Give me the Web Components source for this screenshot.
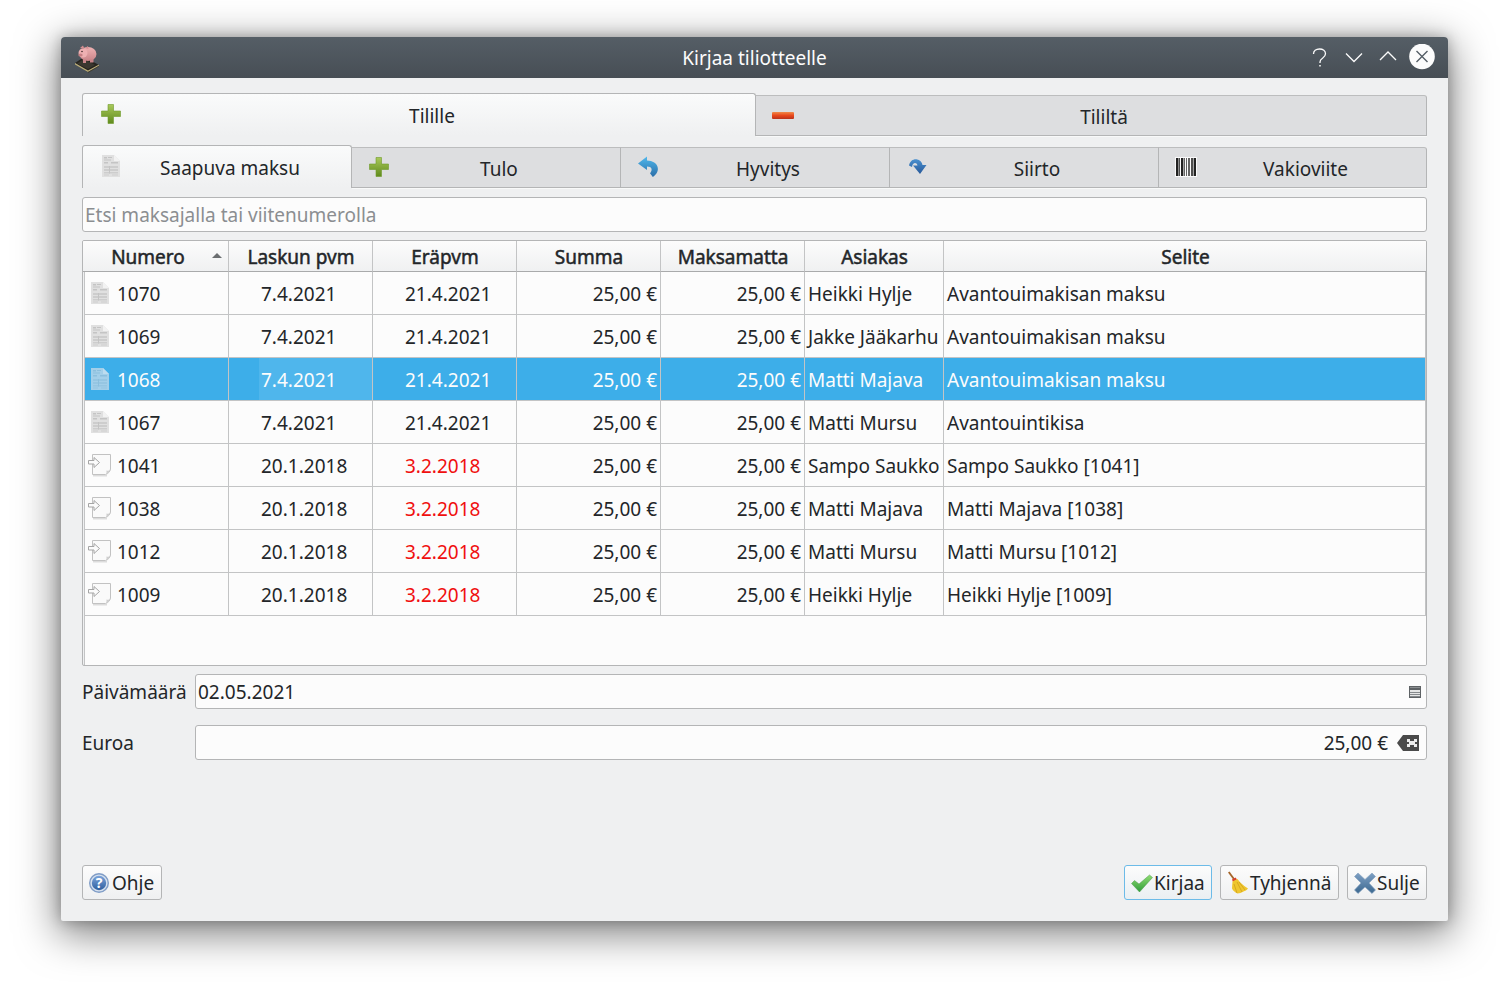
<!DOCTYPE html>
<html lang="fi"><head><meta charset="utf-8"><title>Kirjaa tiliotteelle</title>
<style>
html,body{margin:0;height:100%;background:#fff}
body{padding:37px 61px 61px;box-sizing:border-box;font:19px "Noto Sans",sans-serif;color:#232629;overflow:hidden}
</style></head><body>
<x-window title="Kirjaa tiliotteelle">
  <x-tabbar big>
    <x-tab active icon="plus" label="Tilille"></x-tab>
    <x-tab icon="minus" label="Tililtä"></x-tab>
  </x-tabbar>
  <x-tabbar>
    <x-tab active icon="invoice" label="Saapuva maksu"></x-tab>
    <x-tab icon="plus" label="Tulo"></x-tab>
    <x-tab icon="undo" label="Hyvitys"></x-tab>
    <x-tab icon="redo" label="Siirto"></x-tab>
    <x-tab icon="barcode" label="Vakioviite"></x-tab>
  </x-tabbar>
  <x-search placeholder="Etsi maksajalla tai viitenumerolla"></x-search>
  <x-grid></x-grid>
  <x-field label="Päivämäärä" value="02.05.2021" icon="calendar"></x-field>
  <x-field label="Euroa" value="25,00 €" icon="backspace" right></x-field>
  <x-footer>
    <x-btn icon="help" label="Ohje" w="80"></x-btn>
    <x-spacer></x-spacer>
    <x-btn icon="check" label="Kirjaa" focus w="88"></x-btn>
    <x-btn icon="broom" label="Tyhjennä" w="119"></x-btn>
    <x-btn icon="close" label="Sulje" w="80"></x-btn>
  </x-footer>
</x-window>
<script>
const invoice=(a,b,c,d)=>`<svg width="18" height="22" viewBox="0 0 18 22"><path d="M0 0h12l6 6v16H0z" fill="${a}"/><path d="M12 0l6 6h-6z" fill="${b}"/><g fill="${c}"><rect x="2" y="2" width="3" height="1.500"/><rect x="6" y="2" width="4" height="1"/><rect x="2" y="4.500" width="7" height="1"/><rect x="2" y="7" width="4" height="1.500"/><rect x="9" y="7" width="7" height="1.500"/></g><g fill="${d}"><rect x="2" y="11" width="14" height="2"/><rect x="2" y="14" width="14" height="2"/><rect x="2" y="17" width="14" height="1.500"/><rect x="2" y="19.500" width="5" height="1"/><rect x="10" y="19.500" width="6" height="1"/></g><rect x="7" y="11" width="1" height="7.500" fill="${c}"/></svg>`;
const ICONS={
plus:`<svg width="22" height="22" viewBox="0 0 22 22"><defs><linearGradient id="g" x1="0" y1="0" x2="0" y2="1"><stop offset="0" stop-color="#a9c95a"/><stop offset="1" stop-color="#5f8a1c"/></linearGradient></defs><path d="M8 1.500h5.500v6.500h7v5.500h-7v7H8v-7H1.500V8H8z" fill="url(#g)" stroke="#6f9a2a" stroke-width=".6"/></svg>`,
minus:`<svg width="22" height="22" viewBox="0 0 22 22"><defs><linearGradient id="g" x1="0" y1="0" x2="0" y2="1"><stop offset="0" stop-color="#f08a4a"/><stop offset=".5" stop-color="#e8481c"/><stop offset="1" stop-color="#b9321a"/></linearGradient></defs><rect x="0" y="8" width="22" height="7" rx="1" fill="url(#g)"/></svg>`,
invoice:invoice('#e0e0e0','#f2f2f2','#c4c4c4','#cdcdcd'),
invoiceSel:invoice('#a3cfe9','#bcdcef','#8cbfdd','#96c6e2'),
doc:`<svg width="24" height="24" viewBox="0 0 24 24"><path d="M5 22.700h14" stroke="#dcdcdc" stroke-width="1.500"/><path d="M4.500 1.500h18v14.500c0 2-2.500 5-5 5.500h-13z" fill="#fafafa" stroke="#c2c2c2"/><path d="M17.500 21.500c1.500-1.500 1-3 .8-4 1.500.6 3.200.2 4.200-1.500-.5 2.500-2.500 5-5 5.500z" fill="#cfcfcf"/><path d="M.5 7.500h5.500V4.500l5.500 5-5.500 5v-3.500H.5z" fill="#fbfbfb" stroke="#a5a5a5"/></svg>`,
undo:`<svg width="22" height="22" viewBox="0 0 22 22"><defs><linearGradient id="g" x1="0" y1="0" x2="0" y2="1"><stop offset="0" stop-color="#50b8ec"/><stop offset="1" stop-color="#2b6ea8"/></linearGradient></defs><path d="M10 0.500L1 7.500l9 6.500v-3.500c2.500 0 4 .8 4.500 2.200.4 1.500-.3 3-1.500 4.500l2.800 3.800c3-2 5.500-5.200 5-9C20.200 7 15.500 4.800 10 4.500z" fill="url(#g)"/></svg>`,
redo:`<svg width="22" height="22" viewBox="0 0 22 22"><defs><linearGradient id="g" x1="0" y1="0" x2="0" y2="1"><stop offset="0" stop-color="#4a90cf"/><stop offset="1" stop-color="#27599a"/></linearGradient></defs><path d="M3 9.500C4 5 7 3 10.500 3.300c3.500.4 5.500 2.800 6 5.700H20.500l-6.500 9-7-8.500h4.500c-.6-1.800-1.500-2.600-2.800-2.400C7.200 7.400 6.300 8.800 6 11z" fill="url(#g)"/></svg>`,
barcode:`<svg width="24" height="22" viewBox="-1 0 24 22" shape-rendering="crispEdges"><rect x="-1" width="24" height="22" fill="#fff" opacity=".85"/><g fill="#222"><rect x="0" y="1" width="2" height="20"/><rect x="2" y="1" width="1" height="20" opacity=".5"/><rect x="3" y="1" width="1" height="20" opacity=".8"/><rect x="5" y="1" width="3" height="20"/><rect x="8" y="1" width="1" height="20" opacity=".4"/><rect x="9" y="1" width="1" height="20" opacity=".7"/><rect x="11" y="1" width="1" height="20" opacity=".7"/><rect x="13" y="1" width="2" height="20" opacity=".7"/><rect x="16" y="1" width="1" height="20" opacity=".8"/><rect x="18" y="1" width="1" height="20" opacity=".8"/><rect x="19" y="1" width="1" height="20" opacity=".4"/><rect x="20" y="1" width="2" height="20"/></g></svg>`,
calendar:`<svg width="14" height="14" viewBox="0 0 14 14" shape-rendering="crispEdges"><rect x="1" y="1" width="12" height="12" fill="#5e6265"/><rect x="2" y="5" width="10" height="7" fill="#e4e5e5"/><g fill="#85898c"><rect x="2" y="7" width="10" height="1"/><rect x="2" y="9" width="10" height="1"/><rect x="2" y="11" width="10" height="1"/></g><rect x="2" y="2" width="10" height="1" fill="#8a8e90"/></svg>`,
backspace:`<svg width="22" height="18" viewBox="0 0 22 18"><path d="M6 1h16v16H6L0 9z" fill="#4a4a4a"/><path d="M10 5h3v2h4V5h3v3h-2v2h2v3h-3v-2h-4v2h-3v-3h2V8h-2z" fill="#ececec"/></svg>`,
help:`<svg width="20" height="20" viewBox="0 0 20 20"><defs><linearGradient id="g" x1="0" y1="0" x2="0" y2="1"><stop offset="0" stop-color="#7ba3da"/><stop offset="1" stop-color="#2f5f9f"/></linearGradient></defs><circle cx="10" cy="10" r="10" fill="#7f9cc6"/><circle cx="10" cy="10" r="8.600" fill="#d7e1ee"/><circle cx="10" cy="10" r="7.200" fill="url(#g)"/><text x="10" y="15" text-anchor="middle" font-family="Noto Sans" font-weight="700" font-size="14" fill="#fff">?</text></svg>`,
check:`<svg width="22" height="20" viewBox="0 0 22 20"><defs><linearGradient id="g" x1="0" y1="0" x2="0" y2="1"><stop offset="0" stop-color="#8fdc72"/><stop offset="1" stop-color="#2f9d3a"/></linearGradient></defs><path d="M0.500 10.500l3-3 4.500 3.500L18.500 2l3 2.500L8.500 19z" fill="url(#g)" stroke="#4a9a4a" stroke-width=".5"/></svg>`,
broom:`<svg width="22" height="24" viewBox="0 0 22 24"><path d="M1 1.500l1.500-1L8 8l-1.500 1z" fill="#a5662a"/><path d="M5 8.500l3.500-2 1.500 2-4 2.500z" fill="#d8402a"/><path d="M5.500 10.500l5-2.500c2 3 5 6 10.500 9.500-1 1.500-3 2.500-4.500 3-2 1-4 2-6 2-2-1-4.500-2.500-5.500-5 .2-2.500.3-5 .5-7z" fill="#efc62e"/><path d="M7 13l3 9M10 11l5 10M12 11l6 8" stroke="#cf9f1e" stroke-width=".8" fill="none"/></svg>`,
close:`<svg width="22" height="22" viewBox="0 0 22 22"><defs><linearGradient id="g" x1="0" y1="0" x2="0" y2="1"><stop offset="0" stop-color="#7ea0c4"/><stop offset="1" stop-color="#3b6890"/></linearGradient></defs><path d="M.5 4.500L4 1l7 6.500L18 1l3.500 3.500-6.500 6.500 6.500 7L18 21.500l-7-6.500-7 6.500L.5 18l6.500-7z" fill="url(#g)" stroke="#8aa5c2" stroke-width=".7"/></svg>`,
pig:`<svg width="26" height="28" viewBox="0 0 26 28"><defs><linearGradient id="p" x1="0" y1="0" x2="0" y2="1"><stop offset="0" stop-color="#eeb2b3"/><stop offset="1" stop-color="#c98388"/></linearGradient></defs><path d="M0 18l9-6 15 8-11 7z" fill="#26241f"/><path d="M0 18l13 7.500 11-6v1.200L13 27 0 19.500z" fill="#bcae78"/><path d="M13 27L24 20.700v.8L13 28z" fill="#3f3c32"/><path d="M2 18.500l7-4.500 11 6-7 4z" fill="#3a372f"/><ellipse cx="13" cy="9" rx="8.500" ry="7" fill="url(#p)"/><circle cx="8" cy="8" r="4.500" fill="#eeb0b2"/><ellipse cx="5.500" cy="10" rx="2.200" ry="1.600" fill="#c67f84"/><path d="M5 3l3-2.500L9.500 4zM10 3l3-2 .5 3z" fill="#d48e92"/><circle cx="7" cy="6.500" r=".8" fill="#40292a"/><path d="M8 14h3v4H8zM15 14h3.500v3.500H15z" fill="#c98589"/></svg>`
};
function def(name,html){customElements.define(name,class extends HTMLElement{
  constructor(){super();this.attachShadow({mode:'open'});}
  connectedCallback(){this.shadowRoot.innerHTML=typeof html==='function'?html(this):html;}
});}
const attr=(e,n)=>e.getAttribute(n)||'';

def('x-window',e=>`<style>
:host{display:flex;flex-direction:column;width:1387px;height:884px;background:#eff0f1;border-radius:4px 4px 2px 2px;box-shadow:0 10px 40px 3px rgba(0,0,0,.5),0 0 14px rgba(0,0,0,.25)}
.bar{flex:none;height:41px;background:linear-gradient(#555e66,#474e55);border-radius:4px 4px 0 0;display:flex;align-items:center;color:#fcfcfc;position:relative}
.pig{margin-left:14px;display:flex;width:26px;margin-top:3px}
.t{flex:1;text-align:center;margin-left:-40px}
.btns{position:absolute;right:13px;top:7px;display:flex}
.c{flex:1;display:flex;flex-direction:column;padding:15px 21px 21px;min-height:0}
</style>
<div class="bar"><span class="pig">${ICONS.pig}</span><span class="t">${attr(e,'title')}</span>
<span class="btns">
<svg width="126" height="26" viewBox="0 0 126 26" fill="none" stroke="#fcfcfc" stroke-width="1.300"><path d="M4.500 10c0-3 2.500-5 6-5s6 2 6 4.800c0 2-1 3-3 4.500-1.500 1-2.500 2-2.500 3.700v1"/><path d="M11 21v1.500" stroke-width="1.500"/><path d="M37 9.500l8 8 8-8"/><path d="M71 16l8-8 8 8"/><circle cx="113" cy="12.500" r="12.800" fill="#fcfcfc" stroke="none"/><path d="M107.500 7l11 11M118.500 7l-11 11" stroke="#555e66" stroke-width="1.400"/></svg>
</span></div><div class="c"><slot></slot></div>`);

def('x-tabbar',e=>`<style>
:host{display:grid;grid-template-columns:${e.hasAttribute('big')?'674px 671px':'270px 269px 269px 269px 268px'};height:43px;margin-bottom:9px;flex:none}
</style><slot></slot>`);

def('x-tab',e=>{const a=e.hasAttribute('active');return `<style>
:host{display:block;box-sizing:border-box;min-width:0;${a?'':'padding:2px 0 0;'}}
.b{height:100%;box-sizing:border-box;display:flex;align-items:center;border:1px solid #b4b5b6;${a?'border-bottom:0;background:linear-gradient(#fafbfb,#eff0f1);border-radius:3px 3px 0 0;':'border-left:0;border-top-color:#bcbdbe;background:#dddee0;box-shadow:0 1px #f8f9f9;'}}
:host(:last-child) .b{border-radius:0 3px 0 0}
.i{flex:none;width:22px;height:22px;margin:-2px -14px 0 ${a?17:16}px;display:flex;align-items:center;justify-content:center}
.l{flex:1;text-align:center;white-space:nowrap;padding:${a?'1px 0 0 1px':'3px 0 0 2px'}}
</style><div class="b"><span class="i">${ICONS[attr(e,'icon')]}</span><span class="l">${attr(e,'label')}</span></div>`});

def('x-search',e=>`<style>
:host{display:block;flex:none;height:35px;box-sizing:border-box;border:1px solid #b4b5b6;border-radius:3px;background:#fcfcfc;margin-bottom:8px;padding-left:2px;color:#8b8e91;line-height:35px}
</style>${attr(e,'placeholder')}`);

const ROWS=[
['invoice','1070','7.4.2021','21.4.2021','Heikki Hylje','Avantouimakisan maksu'],
['invoice','1069','7.4.2021','21.4.2021','Jakke Jääkarhu','Avantouimakisan maksu'],
['invoice','1068','7.4.2021','21.4.2021','Matti Majava','Avantouimakisan maksu',1],
['invoice','1067','7.4.2021','21.4.2021','Matti Mursu','Avantouintikisa'],
['doc','1041','20.1.2018','3.2.2018','Sampo Saukko','Sampo Saukko [1041]',0,1],
['doc','1038','20.1.2018','3.2.2018','Matti Majava','Matti Majava [1038]',0,1],
['doc','1012','20.1.2018','3.2.2018','Matti Mursu','Matti Mursu [1012]',0,1],
['doc','1009','20.1.2018','3.2.2018','Heikki Hylje','Heikki Hylje [1009]',0,1]];
def('x-grid',e=>`<style>
:host{display:flex;flex-direction:column;flex:none;height:426px;box-sizing:border-box;border:1px solid #b4b5b6;border-radius:2px;background:#eff0f1;margin-bottom:8px;overflow:hidden}
.h{display:grid;grid-template-columns:146px 144px 144px 144px 144px 139px 482px;grid-template-rows:31px;height:31px;background:linear-gradient(#fcfcfc,#eff0f1);flex:none}
.h div{box-sizing:border-box;border-right:1px solid #c3c4c5;border-bottom:1px solid #a9aaab;text-align:center;font-weight:400;-webkit-text-stroke:.5px currentColor;line-height:32px;white-space:nowrap;position:relative;overflow:visible;padding-left:1px}
.h div:last-child{border-right:0}
.h .s{padding-right:16px}
.h .s i{position:absolute;left:129px;top:12px;width:0;height:0;border:5px solid transparent;border-top:0;border-bottom:5px solid #6b6e70}
.bd{flex:1;margin-left:1px;border-left:1px solid #c3c4c5;background:#fcfcfc}
</style>
<div class="h"><div class="s">Numero<i></i></div><div>Laskun pvm</div><div>Eräpvm</div><div>Summa</div><div>Maksamatta</div><div>Asiakas</div><div>Selite</div></div>
<div class="bd">${ROWS.map(r=>`<x-row icon="${r[0]}" num="${r[1]}" d1="${r[2]}" d2="${r[3]}" who="${r[4]}" text="${r[5]}" ${r[6]?'sel':''} ${r[7]?'late':''}></x-row>`).join('')}</div>`);
def('x-row',e=>{const s=e.hasAttribute('sel'),l=e.hasAttribute('late'),d=attr(e,'icon')==='doc';return `<style>
:host{display:grid;grid-template-columns:144px 144px 144px 144px 144px 139px 482px;height:43px;${s?'background:#3daee9;color:#fcfcfc;':''}}
div{box-sizing:border-box;border-right:1px solid #c3c4c5;border-bottom:1px solid #c3c4c5;line-height:44px;white-space:nowrap;overflow:hidden}
.n{display:flex;align-items:center;padding-left:${d?3:6}px}
.n svg{flex:none}
.n span{margin:2px 0 0 ${d?5:8}px}
.d{padding-left:32px}
.r{text-align:right;padding-right:3px}
.t{padding-left:3px}
.red{color:#f00f0f}
${s?'.hl{background:linear-gradient(90deg,transparent 30px,#4fb6ec 30px)}':''}
</style>
<div class="n">${ICONS[attr(e,'icon')+(s?'Sel':'')]}<span>${attr(e,'num')}</span></div>
<div class="d hl">${attr(e,'d1')}</div><div class="d ${l?'red':''}">${attr(e,'d2')}</div>
<div class="r">25,00 €</div><div class="r">25,00 €</div>
<div class="t">${attr(e,'who')}</div><div class="t">${attr(e,'text')}</div>`});

def('x-field',e=>{const r=e.hasAttribute('right');return `<style>
:host{display:flex;flex:none;height:35px;margin-bottom:16px;align-items:center}
label{width:113px;flex:none}
.f{flex:1;height:100%;box-sizing:border-box;border:1px solid #b4b5b6;border-radius:3px;background:#fcfcfc;display:flex;align-items:center;padding:0 ${r?7:4}px 0 2px}
.v{flex:1;${r?'text-align:right;margin-right:9px':''}}
svg{flex:none;display:block}
</style><label>${attr(e,'label')}</label><div class="f"><span class="v">${attr(e,'value')}</span>${ICONS[attr(e,'icon')]}</div>`});

def('x-footer',`<style>:host{display:flex;gap:8px;margin-top:auto;flex:none}</style><slot></slot>`);
def('x-spacer',`<style>:host{flex:1}</style>`);
def('x-btn',e=>{const f=e.hasAttribute('focus');return `<style>
:host{display:flex;align-items:center;flex:none;width:${attr(e,'w')}px;height:35px;box-sizing:border-box;border:1px solid ${f?'#6cbbe8':'#b4b5b6'};border-radius:3px;background:linear-gradient(#fcfcfc,${f?'#eaeff2':'#eff0f1'});padding:0 0 0 6px;gap:1px;white-space:nowrap}
.i{flex:none;width:22px;display:flex;align-items:center}
svg{flex:none;display:block}
</style><span class="i">${ICONS[attr(e,'icon')]}</span><span>${attr(e,'label')}</span>`});
</script>
</body></html>
